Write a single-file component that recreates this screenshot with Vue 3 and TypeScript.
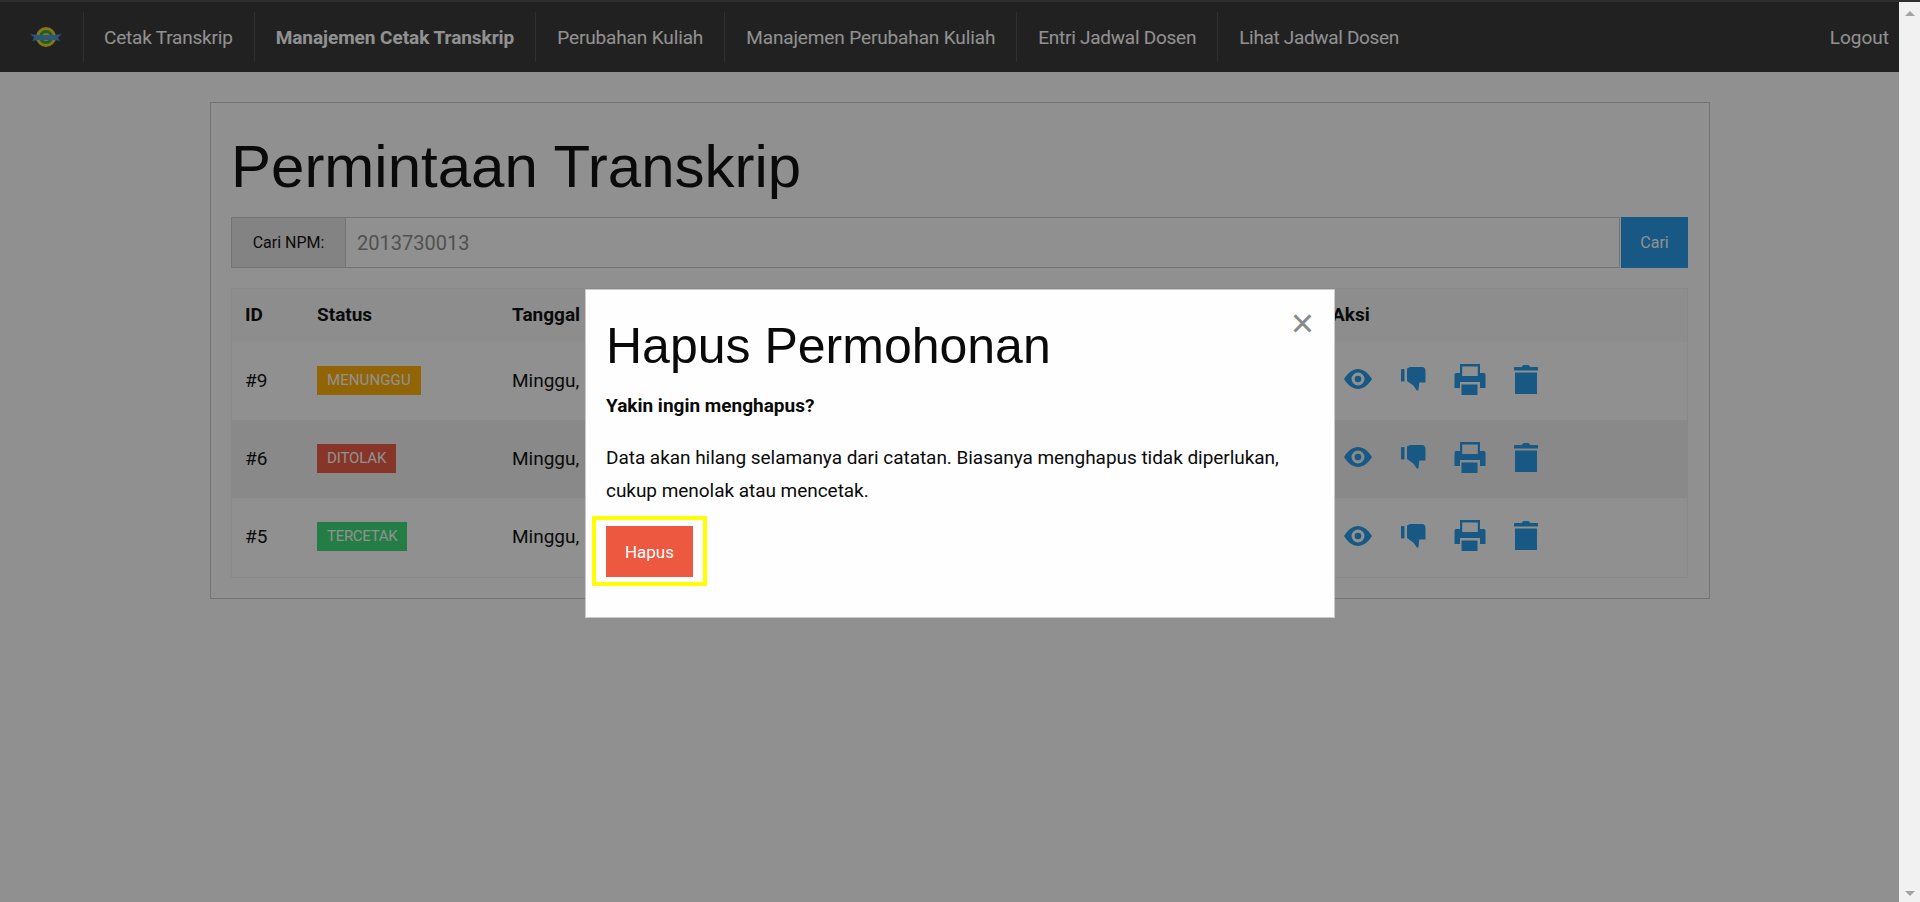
<template>
  <div class="page">
    <div class="main">
      <nav class="topbar">
        <ul class="menu">
          <li class="logo-item">
            <svg class="logo" width="32" height="24" viewBox="0 0 32 24">
              <path d="M0 9l8 1v5l-6 1 2-3.500z" fill="#3f8fd0" />
              <path d="M32 9l-8 1v5l6 1-2-3.500z" fill="#3f8fd0" />
              <circle cx="16" cy="12" r="10" fill="#e8d21c" />
              <circle cx="16" cy="12" r="7" fill="#2f9e4a" />
              <circle cx="16" cy="12" r="4" fill="#e8d21c" />
              <rect x="4" y="10" width="24" height="5" fill="#4a94d6" />
            </svg>
          </li>
          <li v-for="item in menuItems" :key="item" :class="{ active: item === activeItem }">{{ item }}</li>
        </ul>
        <span class="logout">Logout</span>
      </nav>

      <div class="content">
        <section class="panel">
          <h1>Permintaan Transkrip</h1>
          <form class="search" @submit.prevent>
            <label>Cari NPM:</label>
            <input type="text" v-model="npm" />
            <button type="button">Cari</button>
          </form>
          <table>
            <thead>
              <tr>
                <th class="col-id">ID</th>
                <th class="col-status">Status</th>
                <th class="col-date">Tanggal</th>
                <th class="col-action">Aksi</th>
              </tr>
            </thead>
            <tbody>
              <tr v-for="row in rows" :key="row.id">
                <td>#{{ row.id }}</td>
                <td><span class="badge" :class="row.kind">{{ row.status }}</span></td>
                <td>{{ row.date }}</td>
                <td>
                  <div class="actions">
                    <svg width="28" height="20" viewBox="0 0 28 20">
                      <path fill-rule="evenodd" d="M0 10C4 3.500 9 0 14 0s10 3.500 14 10c-4 6.500-9 10-14 10S4 16.500 0 10zm14-6.500a6.500 6.500 0 1 0 0 13 6.500 6.500 0 0 0 0-13z" />
                      <circle cx="14" cy="10" r="3.300" />
                    </svg>
                    <svg width="26" height="24" viewBox="0 0 26 24">
                      <rect x="1" y="2" width="3.500" height="12.500" rx="0.800" />
                      <path d="M7 1.500L10 0h12c2.500 0 3.500 2 3.500 4.500v11H19.300l-.8 7.500c-.4 1-1.400 1-2 0l-3.200-4.500L7 14z" />
                    </svg>
                    <svg width="32" height="31" viewBox="0 0 32 31">
                      <path fill-rule="evenodd" d="M6 0h20v9h4c1 0 1.500 1 1.500 2v13H26v-6H6v6H.5V11c0-1 .5-2 1.500-2h4zm2.200 2.500V12h15.600V2.500z" />
                      <rect x="7.500" y="20.500" width="16" height="10.500" />
                    </svg>
                    <svg width="24" height="29" viewBox="0 0 24 29">
                      <path d="M8 2c0-1 1-2 2-2h4c1 0 2 1 2 2h7c.6 0 1 .4 1 1v2.500H0V3c0-.6.4-1 1-1z" />
                      <rect x="1" y="7.500" width="22" height="21.500" />
                    </svg>
                  </div>
                </td>
              </tr>
            </tbody>
          </table>
        </section>
      </div>

      <div class="overlay">
        <div class="modal">
          <span class="close">×</span>
          <h2>Hapus Permohonan</h2>
          <p class="lead">Yakin ingin menghapus?</p>
          <p class="desc">Data akan hilang selamanya dari catatan. Biasanya menghapus tidak diperlukan, cukup menolak atau mencetak.</p>
          <button type="button" class="delete">Hapus</button>
        </div>
      </div>
    </div>

    <div class="scrollbar">
      <span class="arrow up"></span>
      <span class="arrow down"></span>
    </div>
  </div>
</template>

<script setup lang="ts">
import { ref } from 'vue'

const npm = ref('2013730013')

const menuItems = [
  'Cetak Transkrip',
  'Manajemen Cetak Transkrip',
  'Perubahan Kuliah',
  'Manajemen Perubahan Kuliah',
  'Entri Jadwal Dosen',
  'Lihat Jadwal Dosen'
]
const activeItem = 'Manajemen Cetak Transkrip'

const rows = [
  { id: 9, status: 'MENUNGGU', kind: 'warning', date: 'Minggu,' },
  { id: 6, status: 'DITOLAK', kind: 'alert', date: 'Minggu,' },
  { id: 5, status: 'TERCETAK', kind: 'success', date: 'Minggu,' }
]
</script>

<style>
html,
body {
  margin: 0;
  overflow: hidden;
}
</style>

<style scoped>
.page {
  display: flex;
  height: 902px;
  border-top: 2px solid #2e2e2e;
  box-sizing: border-box;
  font-family: Roboto, "Noto Sans", sans-serif;
  font-size: 19px;
  color: #0a0a0a;
  overflow: hidden;
}

.main {
  position: relative;
  flex: 1;
  background: #fefefe;
}

.scrollbar {
  width: 21px;
  background: #f1f1f1;
  display: flex;
  flex-direction: column;
  justify-content: space-between;
  align-items: center;
  padding: 9px 0 6px;
  box-sizing: border-box;
}

.arrow {
  width: 0;
  height: 0;
  border-left: 5px solid transparent;
  border-right: 5px solid transparent;
}

.arrow.up {
  border-bottom: 5px solid #a3a3a3;
}

.arrow.down {
  border-top: 5px solid #a3a3a3;
}

.topbar {
  display: flex;
  justify-content: space-between;
  align-items: center;
  height: 70px;
  background: #333;
  padding: 0 10px 0 0;
  color: #fff;
}

.menu {
  display: flex;
  align-items: center;
  list-style: none;
  margin: 0;
  padding: 0 0 0 30px;
  letter-spacing: -0.13px;
}

.menu li {
  display: flex;
  align-items: center;
  height: 50px;
  padding: 0 21px;
  border-left: 1px solid #4e4e4e;
  white-space: nowrap;
}

.menu li.logo-item {
  border-left: 0;
  padding: 0 21px 0 0;
}

.menu li:nth-child(2) {
  padding-left: 20px;
  letter-spacing: -0.2px;
}

.menu li:nth-child(6) {
  letter-spacing: -0.25px;
}

.menu li:nth-child(7) {
  letter-spacing: -0.33px;
}

.menu li.active {
  font-weight: 700;
  letter-spacing: -0.05px;
}

.content {
  padding: 30px 189px 0 210px;
}

.panel {
  border: 1px solid #cacaca;
  padding: 22px 21px 20px 20px;
}

h1 {
  margin: 0 0 8px;
  font-family: "Liberation Sans", Arial, sans-serif;
  font-size: 60px;
  font-weight: 400;
  line-height: 84px;
}

.search {
  display: flex;
  height: 51px;
  margin: 0 0 20px;
}

.search label {
  display: flex;
  align-items: center;
  justify-content: center;
  width: 115px;
  background: #e6e6e6;
  border: 1px solid #cacaca;
  box-sizing: border-box;
  font-size: 16px;
}

.search input {
  flex: 1;
  min-width: 0;
  box-sizing: border-box;
  border: 1px solid #cacaca;
  border-left: 0;
  background: #fefefe;
  padding: 0 11px;
  font-family: inherit;
  font-size: 20px;
  color: #8a8a8a;
  outline: none;
}

.search button {
  width: 67px;
  margin-left: 1px;
  border: 0;
  background: #2199e8;
  color: #fefefe;
  font-family: inherit;
  font-size: 16px;
}

table {
  width: 100%;
  border-collapse: collapse;
  border: 1px solid #f1f1f1;
  table-layout: fixed;
}

thead {
  background: #f8f8f8;
}

th {
  height: 51px;
  padding: 0 0 2px 13px;
  text-align: left;
  font-weight: 700;
}

td {
  height: 76px;
  padding: 0 0 2px 13px;
}

tbody tr {
  background: #fefefe;
}

tbody tr:nth-child(even) {
  background: #f1f1f1;
}

tbody tr:last-child td {
  height: 77px;
}

.col-id {
  width: 59px;
}

.col-status {
  width: 182px;
}

.col-date {
  width: 807px;
}

.badge {
  display: inline-block;
  padding: 0 10px;
  height: 29px;
  line-height: 29px;
  font-size: 15px;
  color: #fefefe;
  vertical-align: middle;
}

.badge.warning {
  background: #ffae00;
  letter-spacing: 0.1px;
}

.badge.alert {
  background: #ec5840;
  letter-spacing: -0.15px;
}

.badge.success {
  background: #3adb76;
  letter-spacing: -0.3px;
}

.actions {
  display: flex;
  align-items: center;
  gap: 28px;
  margin: -2px 0 0 12px;
  fill: #2199e8;
}

.overlay {
  position: absolute;
  inset: 0;
  background: rgba(10, 10, 10, 0.45);
}

.modal {
  position: absolute;
  top: 287px;
  left: 585px;
  width: 750px;
  height: 329px;
  box-sizing: border-box;
  padding: 23px 20px 16px;
  background: #fefefe;
  border: 1px solid #cacaca;
}

.close {
  position: absolute;
  top: 13px;
  right: 20px;
  font-family: "Liberation Sans", Arial, sans-serif;
  font-size: 40px;
  line-height: 40px;
  color: #8a8a8a;
}

h2 {
  margin: 0 0 10px;
  font-family: "Liberation Sans", Arial, sans-serif;
  font-size: 50px;
  font-weight: 400;
  line-height: 67px;
}

.lead {
  margin: 0 0 19px;
  font-weight: 700;
  line-height: 32px;
}

.desc {
  margin: 0 0 19px;
  line-height: 33px;
  letter-spacing: -0.04px;
}

.delete {
  position: relative;
  display: block;
  width: 87px;
  height: 51px;
  border: 0;
  background: #ec5840;
  color: #fefefe;
  font-family: inherit;
  font-size: 17px;
}

.delete::after {
  content: "";
  position: absolute;
  top: -10px;
  left: -14px;
  width: 115px;
  height: 70px;
  box-sizing: border-box;
  border: 4px solid #ffff00;
}
</style>
